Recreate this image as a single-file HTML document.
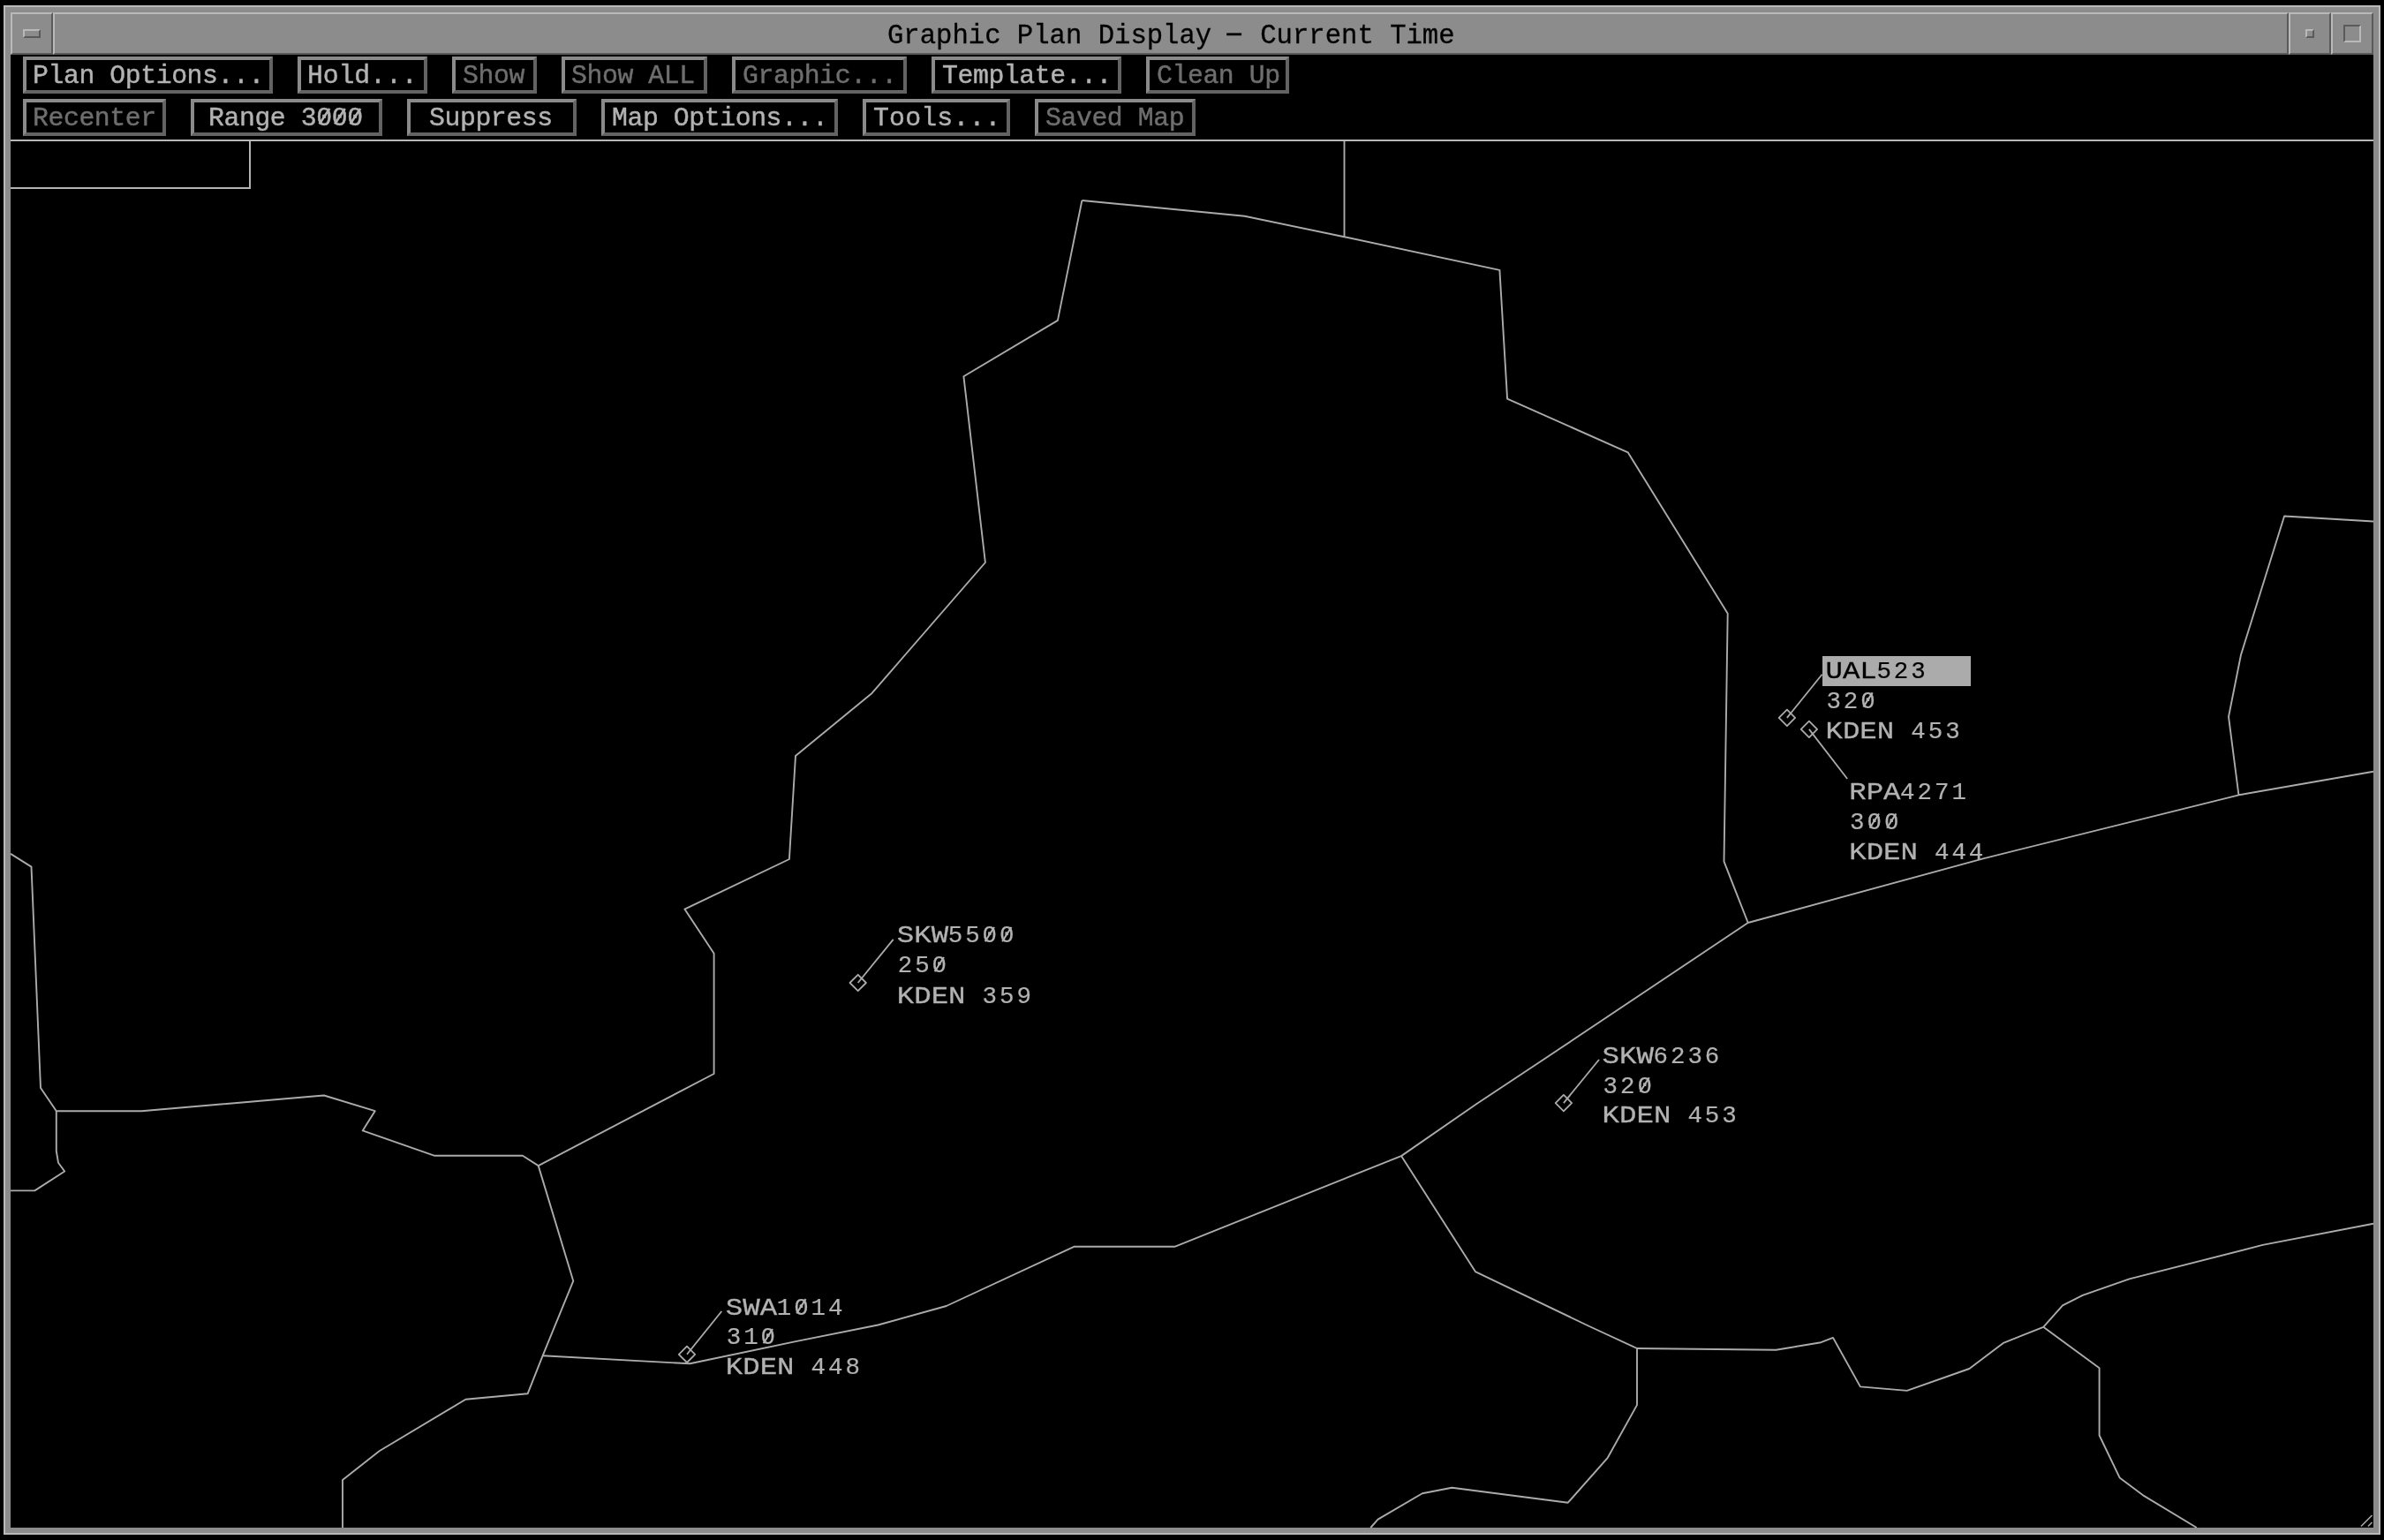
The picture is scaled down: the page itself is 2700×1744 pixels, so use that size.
<!DOCTYPE html>
<html lang="en"><head><meta charset="utf-8"><title>Graphic Plan Display - Current Time</title>
<style>
html,body{margin:0;padding:0;background:#000;}
body{width:2700px;height:1744px;position:relative;overflow:hidden;font-family:"Liberation Mono",monospace;}
.abs{position:absolute;}
#frame{left:4px;top:6px;width:2688px;height:1728px;background:#8c8c8c;border:2px solid #b9b9b9;}
#client{left:12px;top:62px;width:2676px;height:1668px;background:#000;}
.tb{top:14px;height:44px;background:#8c8c8c;border-style:solid;border-width:2px;border-color:#b9b9b9 #5a5a5a #5a5a5a #b9b9b9;}
#title{left:60px;width:2528px;text-align:center;font-size:30.6px;line-height:44px;color:#000;white-space:pre;}
.btn{height:34px;border-style:solid;border-width:4px;border-color:#8a8a8a #636363 #636363 #8a8a8a;background:#000;color:#b2b2b2;
 font-size:29.8px;line-height:34px;text-align:left;white-space:pre;letter-spacing:-0.42px;box-sizing:content-box;-webkit-text-stroke:0.45px currentColor;}
.btn.dis{color:#6e6e6e;}
#title i{display:inline-block;font-style:normal;transform:translate(-2.5px,-2.3px) scaleX(1.95);}
.btn span{display:inline-block;position:relative;top:1px;will-change:transform;}
#title span{display:inline-block;position:relative;top:2.5px;will-change:transform;-webkit-text-stroke:0.3px #000;}

</style></head><body>
<div id="frame" class="abs"></div>
<div id="client" class="abs"></div>
<div class="abs tb" style="left:12px;width:44px;"></div>
<div class="abs" style="left:26px;top:33px;width:16px;height:6px;border-style:solid;border-width:2px;border-color:#b9b9b9 #5a5a5a #5a5a5a #b9b9b9;background:#8c8c8c;"></div>
<div id="title" class="abs tb"><span>Graphic Plan Display <i>-</i> Current Time</span></div>
<div class="abs tb" style="left:2592px;width:44px;"></div>
<div class="abs" style="left:2611px;top:33px;width:6px;height:6px;border-style:solid;border-width:2px;border-color:#b9b9b9 #5a5a5a #5a5a5a #b9b9b9;background:#8c8c8c;"></div>
<div class="abs tb" style="left:2640px;width:44px;"></div>
<div class="abs" style="left:2654px;top:28px;width:16px;height:16px;border-style:solid;border-width:2px;border-color:#5a5a5a #b9b9b9 #b9b9b9 #5a5a5a;background:#8c8c8c;"></div>
<div class="abs btn" style="left:26px;top:64px;width:268px;padding-left:7px;"><span>Plan Options...</span></div>
<div class="abs btn" style="left:337px;top:64px;width:132px;padding-left:7px;letter-spacing:-0.1px;"><span>Hold...</span></div>
<div class="abs btn dis" style="left:512px;top:64px;width:80px;padding-left:8px;"><span>Show</span></div>
<div class="abs btn dis" style="left:636px;top:64px;width:150px;padding-left:7px;"><span>Show ALL</span></div>
<div class="abs btn dis" style="left:829px;top:64px;width:182px;padding-left:8px;"><span>Graphic...</span></div>
<div class="abs btn" style="left:1055px;top:64px;width:199px;padding-left:8px;"><span>Template...</span></div>
<div class="abs btn dis" style="left:1298px;top:64px;width:146px;padding-left:8px;"><span>Clean Up</span></div>
<div class="abs btn dis" style="left:26px;top:112px;width:147px;padding-left:7px;"><span>Recenter</span></div>
<div class="abs btn" style="left:216px;top:112px;width:192.7px;padding-left:16.3px;"><span>Range 3000</span></div>
<div class="abs btn" style="left:461px;top:112px;width:163px;padding-left:21px;"><span>Suppress</span></div>
<div class="abs btn" style="left:681px;top:112px;width:252px;padding-left:8px;"><span>Map Options...</span></div>
<div class="abs btn" style="left:977px;top:112px;width:150.7px;padding-left:8.3px;letter-spacing:0.2px;"><span>Tools...</span></div>
<div class="abs btn dis" style="left:1172px;top:112px;width:166.4px;padding-left:7.6px;"><span>Saved Map</span></div>
<div class="abs" style="left:12px;top:158px;width:2676px;height:2px;background:#b8b8b8;"></div>
<div class="abs" style="left:12px;top:160px;width:270px;height:52px;border-right:2px solid #b4b4b4;border-bottom:2px solid #b4b4b4;"></div>
<svg class="abs" style="left:0;top:0;will-change:transform;" width="2700" height="1744" viewBox="0 0 2700 1744">
<g fill="none" stroke="#ababab" stroke-width="1.9" stroke-linejoin="round">
<polyline points="1225.4,227 1409.6,244.8 1522.5,268.2 1698.4,305.9 1707.1,451.6 1843.8,512.4 1956.7,694.7 1952.5,975.6 1979.7,1045"/>
<polyline points="1522.5,160 1522.5,268.2"/>
<polyline points="1225.4,227 1197.9,362.9 1091.4,426.3 1115.9,637 987.6,784.9 901,856 893.9,973 775.4,1029.6 808.6,1079.8 808.6,1216 609.7,1320.1"/>
<polyline points="1979.7,1045 2246,972.3 2535.6,900.3 2688,873.7"/>
<polyline points="1979.7,1045 1740,1205.3 1672.5,1250 1587,1309.1 1330.4,1411.8 1216.3,1411.8 1071.8,1479 994.4,1500.5 900,1519.4 781.4,1544.3 614.6,1535.3"/>
<polyline points="2688,590.5 2587.1,584.5 2538,741.5 2524,811.7 2535.4,900"/>
<polyline points="12,966.9 35.5,981.6 46,1232 63.8,1258.2 160.4,1258.2 366.9,1240.5 424.7,1258.2 410.7,1280.4 492.3,1308.8 591.9,1308.8 609.7,1320.1 649.3,1450.7 614.6,1535.3 597.6,1578.3 527.4,1584.7 429.6,1643.2 388,1676 388,1730"/>
<polyline points="63.8,1258.2 63.8,1303.5 66,1316.7 73.2,1326.5 39.3,1348.4 12,1348.4"/>
<polyline points="1587,1309.1 1670.9,1440.1 1800,1502 1854,1527 2011.4,1528.8 2062.4,1520.2 2076,1514.9 2106.9,1570.4 2159.8,1574.9 2230.4,1550 2268.9,1520.9 2314.2,1502.8 2336,1478.3 2358.7,1466.9 2411.6,1448.4 2562.6,1409.9 2688,1385.8"/>
<polyline points="2314.2,1502.8 2377.6,1549.2 2377.6,1625.5 2400.6,1673.4 2426.7,1693.1 2487.8,1730"/>
<polyline points="1854,1527 1854,1591.1 1820.8,1650.8 1775.8,1701.7 1644.4,1684.8 1610.8,1691.2 1560.6,1720.6 1552.3,1730"/>
</g>
<rect x="2064" y="743" width="168" height="34" fill="#ababab"/>
<g fill="none" stroke="#ababab" stroke-width="1.8" stroke-linejoin="round">
<polygon points="2023.9,803.6999999999999 2033.1000000000001,812.9 2023.9,822.1 2014.7,812.9"/>
<line x1="2023.9" y1="812.9" x2="2063.6" y2="763.8"/>
</g>
<text transform="translate(2067.50,767.5) scale(1.157,1)" font-family="Liberation Mono" font-size="28.0" fill="#000" stroke="#000" stroke-width="0.3">UAL</text>
<text transform="translate(2125.41,767.5) scale(0.98,1)" font-family="Liberation Mono" font-size="28.0" fill="#000" stroke="#000" stroke-width="0.2">5</text>
<text transform="translate(2144.85,767.5) scale(0.98,1)" font-family="Liberation Mono" font-size="28.0" fill="#000" stroke="#000" stroke-width="0.2">2</text>
<text transform="translate(2164.29,767.5) scale(0.98,1)" font-family="Liberation Mono" font-size="28.0" fill="#000" stroke="#000" stroke-width="0.2">3</text>
<text transform="translate(2068.40,801.7) scale(0.98,1)" font-family="Liberation Mono" font-size="28.0" fill="#b2b2b2" stroke="#b2b2b2" stroke-width="0.2">3</text>
<text transform="translate(2087.84,801.7) scale(0.98,1)" font-family="Liberation Mono" font-size="28.0" fill="#b2b2b2" stroke="#b2b2b2" stroke-width="0.2">2</text>
<text transform="translate(2107.28,801.7) scale(0.98,1)" font-family="Liberation Mono" font-size="28.0" fill="#b2b2b2" stroke="#b2b2b2" stroke-width="0.2">0</text>
<line x1="2110.36" y1="800.61" x2="2120.67" y2="784.34" stroke="#b2b2b2" stroke-width="2.1"/>
<text transform="translate(2067.50,835.6) scale(1.157,1)" font-family="Liberation Mono" font-size="28.0" fill="#b2b2b2" stroke="#b2b2b2" stroke-width="0.3">KDEN</text>
<text transform="translate(2164.29,835.6) scale(0.98,1)" font-family="Liberation Mono" font-size="28.0" fill="#b2b2b2" stroke="#b2b2b2" stroke-width="0.2">4</text>
<text transform="translate(2183.73,835.6) scale(0.98,1)" font-family="Liberation Mono" font-size="28.0" fill="#b2b2b2" stroke="#b2b2b2" stroke-width="0.2">5</text>
<text transform="translate(2203.16,835.6) scale(0.98,1)" font-family="Liberation Mono" font-size="28.0" fill="#b2b2b2" stroke="#b2b2b2" stroke-width="0.2">3</text>
<g fill="none" stroke="#ababab" stroke-width="1.8" stroke-linejoin="round">
<polygon points="2048.9,816.6999999999999 2058.1,825.9 2048.9,835.1 2039.7,825.9"/>
<line x1="2048.9" y1="825.9" x2="2092.2" y2="882"/>
</g>
<text transform="translate(2094.20,904.8) scale(1.157,1)" font-family="Liberation Mono" font-size="28.0" fill="#b2b2b2" stroke="#b2b2b2" stroke-width="0.3">RPA</text>
<text transform="translate(2152.11,904.8) scale(0.98,1)" font-family="Liberation Mono" font-size="28.0" fill="#b2b2b2" stroke="#b2b2b2" stroke-width="0.2">4</text>
<text transform="translate(2171.55,904.8) scale(0.98,1)" font-family="Liberation Mono" font-size="28.0" fill="#b2b2b2" stroke="#b2b2b2" stroke-width="0.2">2</text>
<text transform="translate(2190.99,904.8) scale(0.98,1)" font-family="Liberation Mono" font-size="28.0" fill="#b2b2b2" stroke="#b2b2b2" stroke-width="0.2">7</text>
<text transform="translate(2210.43,904.8) scale(0.98,1)" font-family="Liberation Mono" font-size="28.0" fill="#b2b2b2" stroke="#b2b2b2" stroke-width="0.2">1</text>
<text transform="translate(2095.10,938.9) scale(0.98,1)" font-family="Liberation Mono" font-size="28.0" fill="#b2b2b2" stroke="#b2b2b2" stroke-width="0.2">3</text>
<text transform="translate(2114.54,938.9) scale(0.98,1)" font-family="Liberation Mono" font-size="28.0" fill="#b2b2b2" stroke="#b2b2b2" stroke-width="0.2">0</text>
<line x1="2117.62" y1="937.81" x2="2127.94" y2="921.54" stroke="#b2b2b2" stroke-width="2.1"/>
<text transform="translate(2133.98,938.9) scale(0.98,1)" font-family="Liberation Mono" font-size="28.0" fill="#b2b2b2" stroke="#b2b2b2" stroke-width="0.2">0</text>
<line x1="2137.06" y1="937.81" x2="2147.37" y2="921.54" stroke="#b2b2b2" stroke-width="2.1"/>
<text transform="translate(2094.20,972.9) scale(1.157,1)" font-family="Liberation Mono" font-size="28.0" fill="#b2b2b2" stroke="#b2b2b2" stroke-width="0.3">KDEN</text>
<text transform="translate(2190.99,972.9) scale(0.98,1)" font-family="Liberation Mono" font-size="28.0" fill="#b2b2b2" stroke="#b2b2b2" stroke-width="0.2">4</text>
<text transform="translate(2210.43,972.9) scale(0.98,1)" font-family="Liberation Mono" font-size="28.0" fill="#b2b2b2" stroke="#b2b2b2" stroke-width="0.2">4</text>
<text transform="translate(2229.86,972.9) scale(0.98,1)" font-family="Liberation Mono" font-size="28.0" fill="#b2b2b2" stroke="#b2b2b2" stroke-width="0.2">4</text>
<g fill="none" stroke="#ababab" stroke-width="1.8" stroke-linejoin="round">
<polygon points="971.7,1103.8 980.9000000000001,1113 971.7,1122.2 962.5,1113"/>
<line x1="971.7" y1="1113" x2="1011.7" y2="1063.9"/>
</g>
<text transform="translate(1015.80,1067.3) scale(1.157,1)" font-family="Liberation Mono" font-size="28.0" fill="#b2b2b2" stroke="#b2b2b2" stroke-width="0.3">SKW</text>
<text transform="translate(1073.71,1067.3) scale(0.98,1)" font-family="Liberation Mono" font-size="28.0" fill="#b2b2b2" stroke="#b2b2b2" stroke-width="0.2">5</text>
<text transform="translate(1093.15,1067.3) scale(0.98,1)" font-family="Liberation Mono" font-size="28.0" fill="#b2b2b2" stroke="#b2b2b2" stroke-width="0.2">5</text>
<text transform="translate(1112.59,1067.3) scale(0.98,1)" font-family="Liberation Mono" font-size="28.0" fill="#b2b2b2" stroke="#b2b2b2" stroke-width="0.2">0</text>
<line x1="1115.67" y1="1066.21" x2="1125.99" y2="1049.94" stroke="#b2b2b2" stroke-width="2.1"/>
<text transform="translate(1132.03,1067.3) scale(0.98,1)" font-family="Liberation Mono" font-size="28.0" fill="#b2b2b2" stroke="#b2b2b2" stroke-width="0.2">0</text>
<line x1="1135.11" y1="1066.21" x2="1145.42" y2="1049.94" stroke="#b2b2b2" stroke-width="2.1"/>
<text transform="translate(1016.70,1101.4) scale(0.98,1)" font-family="Liberation Mono" font-size="28.0" fill="#b2b2b2" stroke="#b2b2b2" stroke-width="0.2">2</text>
<text transform="translate(1036.14,1101.4) scale(0.98,1)" font-family="Liberation Mono" font-size="28.0" fill="#b2b2b2" stroke="#b2b2b2" stroke-width="0.2">5</text>
<text transform="translate(1055.58,1101.4) scale(0.98,1)" font-family="Liberation Mono" font-size="28.0" fill="#b2b2b2" stroke="#b2b2b2" stroke-width="0.2">0</text>
<line x1="1058.66" y1="1100.31" x2="1068.97" y2="1084.04" stroke="#b2b2b2" stroke-width="2.1"/>
<text transform="translate(1015.80,1135.6) scale(1.157,1)" font-family="Liberation Mono" font-size="28.0" fill="#b2b2b2" stroke="#b2b2b2" stroke-width="0.3">KDEN</text>
<text transform="translate(1112.59,1135.6) scale(0.98,1)" font-family="Liberation Mono" font-size="28.0" fill="#b2b2b2" stroke="#b2b2b2" stroke-width="0.2">3</text>
<text transform="translate(1132.03,1135.6) scale(0.98,1)" font-family="Liberation Mono" font-size="28.0" fill="#b2b2b2" stroke="#b2b2b2" stroke-width="0.2">5</text>
<text transform="translate(1151.46,1135.6) scale(0.98,1)" font-family="Liberation Mono" font-size="28.0" fill="#b2b2b2" stroke="#b2b2b2" stroke-width="0.2">9</text>
<g fill="none" stroke="#ababab" stroke-width="1.8" stroke-linejoin="round">
<polygon points="1770.9,1239.8999999999999 1780.1000000000001,1249.1 1770.9,1258.3 1761.7,1249.1"/>
<line x1="1770.9" y1="1249.1" x2="1811" y2="1200"/>
</g>
<text transform="translate(1814.60,1203.6) scale(1.157,1)" font-family="Liberation Mono" font-size="28.0" fill="#b2b2b2" stroke="#b2b2b2" stroke-width="0.3">SKW</text>
<text transform="translate(1872.51,1203.6) scale(0.98,1)" font-family="Liberation Mono" font-size="28.0" fill="#b2b2b2" stroke="#b2b2b2" stroke-width="0.2">6</text>
<text transform="translate(1891.95,1203.6) scale(0.98,1)" font-family="Liberation Mono" font-size="28.0" fill="#b2b2b2" stroke="#b2b2b2" stroke-width="0.2">2</text>
<text transform="translate(1911.39,1203.6) scale(0.98,1)" font-family="Liberation Mono" font-size="28.0" fill="#b2b2b2" stroke="#b2b2b2" stroke-width="0.2">3</text>
<text transform="translate(1930.83,1203.6) scale(0.98,1)" font-family="Liberation Mono" font-size="28.0" fill="#b2b2b2" stroke="#b2b2b2" stroke-width="0.2">6</text>
<text transform="translate(1815.50,1237.6) scale(0.98,1)" font-family="Liberation Mono" font-size="28.0" fill="#b2b2b2" stroke="#b2b2b2" stroke-width="0.2">3</text>
<text transform="translate(1834.94,1237.6) scale(0.98,1)" font-family="Liberation Mono" font-size="28.0" fill="#b2b2b2" stroke="#b2b2b2" stroke-width="0.2">2</text>
<text transform="translate(1854.38,1237.6) scale(0.98,1)" font-family="Liberation Mono" font-size="28.0" fill="#b2b2b2" stroke="#b2b2b2" stroke-width="0.2">0</text>
<line x1="1857.46" y1="1236.51" x2="1867.77" y2="1220.24" stroke="#b2b2b2" stroke-width="2.1"/>
<text transform="translate(1814.60,1271.4) scale(1.157,1)" font-family="Liberation Mono" font-size="28.0" fill="#b2b2b2" stroke="#b2b2b2" stroke-width="0.3">KDEN</text>
<text transform="translate(1911.39,1271.4) scale(0.98,1)" font-family="Liberation Mono" font-size="28.0" fill="#b2b2b2" stroke="#b2b2b2" stroke-width="0.2">4</text>
<text transform="translate(1930.83,1271.4) scale(0.98,1)" font-family="Liberation Mono" font-size="28.0" fill="#b2b2b2" stroke="#b2b2b2" stroke-width="0.2">5</text>
<text transform="translate(1950.26,1271.4) scale(0.98,1)" font-family="Liberation Mono" font-size="28.0" fill="#b2b2b2" stroke="#b2b2b2" stroke-width="0.2">3</text>
<g fill="none" stroke="#ababab" stroke-width="1.8" stroke-linejoin="round">
<polygon points="778,1524.6 787.2,1533.8 778,1543.0 768.8,1533.8"/>
<line x1="778" y1="1533.8" x2="817.3" y2="1485"/>
</g>
<text transform="translate(821.80,1488.5) scale(1.157,1)" font-family="Liberation Mono" font-size="28.0" fill="#b2b2b2" stroke="#b2b2b2" stroke-width="0.3">SWA</text>
<text transform="translate(879.71,1488.5) scale(0.98,1)" font-family="Liberation Mono" font-size="28.0" fill="#b2b2b2" stroke="#b2b2b2" stroke-width="0.2">1</text>
<text transform="translate(899.15,1488.5) scale(0.98,1)" font-family="Liberation Mono" font-size="28.0" fill="#b2b2b2" stroke="#b2b2b2" stroke-width="0.2">0</text>
<line x1="902.23" y1="1487.41" x2="912.55" y2="1471.14" stroke="#b2b2b2" stroke-width="2.1"/>
<text transform="translate(918.59,1488.5) scale(0.98,1)" font-family="Liberation Mono" font-size="28.0" fill="#b2b2b2" stroke="#b2b2b2" stroke-width="0.2">1</text>
<text transform="translate(938.03,1488.5) scale(0.98,1)" font-family="Liberation Mono" font-size="28.0" fill="#b2b2b2" stroke="#b2b2b2" stroke-width="0.2">4</text>
<text transform="translate(822.70,1522.4) scale(0.98,1)" font-family="Liberation Mono" font-size="28.0" fill="#b2b2b2" stroke="#b2b2b2" stroke-width="0.2">3</text>
<text transform="translate(842.14,1522.4) scale(0.98,1)" font-family="Liberation Mono" font-size="28.0" fill="#b2b2b2" stroke="#b2b2b2" stroke-width="0.2">1</text>
<text transform="translate(861.58,1522.4) scale(0.98,1)" font-family="Liberation Mono" font-size="28.0" fill="#b2b2b2" stroke="#b2b2b2" stroke-width="0.2">0</text>
<line x1="864.66" y1="1521.31" x2="874.97" y2="1505.04" stroke="#b2b2b2" stroke-width="2.1"/>
<text transform="translate(821.80,1556.4) scale(1.157,1)" font-family="Liberation Mono" font-size="28.0" fill="#b2b2b2" stroke="#b2b2b2" stroke-width="0.3">KDEN</text>
<text transform="translate(918.59,1556.4) scale(0.98,1)" font-family="Liberation Mono" font-size="28.0" fill="#b2b2b2" stroke="#b2b2b2" stroke-width="0.2">4</text>
<text transform="translate(938.03,1556.4) scale(0.98,1)" font-family="Liberation Mono" font-size="28.0" fill="#b2b2b2" stroke="#b2b2b2" stroke-width="0.2">4</text>
<text transform="translate(957.46,1556.4) scale(0.98,1)" font-family="Liberation Mono" font-size="28.0" fill="#b2b2b2" stroke="#b2b2b2" stroke-width="0.2">8</text>
<line x1="361.65" y1="140.58" x2="373.29" y2="122.97" stroke="#b2b2b2" stroke-width="2.6"/>
<line x1="379.11" y1="140.58" x2="390.75" y2="122.97" stroke="#b2b2b2" stroke-width="2.6"/>
<line x1="396.57" y1="140.58" x2="408.21" y2="122.97" stroke="#b2b2b2" stroke-width="2.6"/>
<g stroke="#a8a8a8" stroke-width="1.6"><line x1="2674" y1="1728.5" x2="2686.5" y2="1716"/><line x1="2682" y1="1728.5" x2="2686.5" y2="1724"/></g>
</svg>
</body></html>
